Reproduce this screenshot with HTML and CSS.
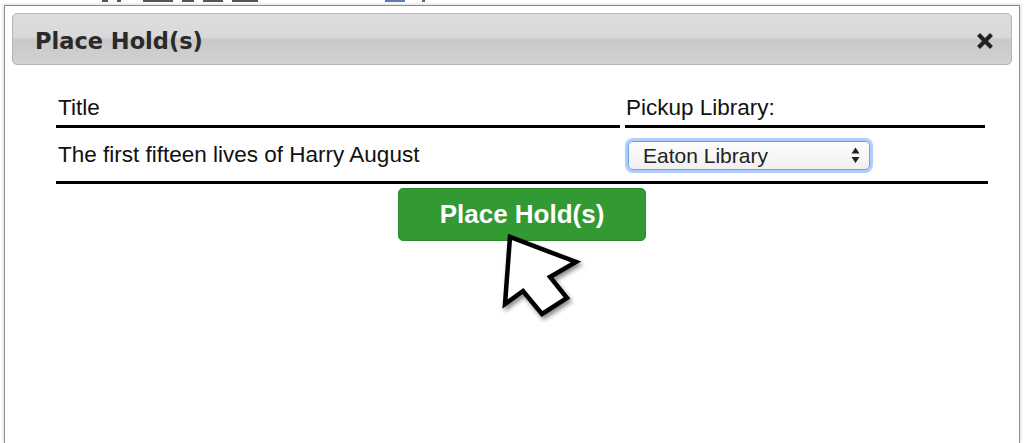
FILE: index.html
```html
<!DOCTYPE html>
<html lang="en">
<head>
    <meta charset="UTF-8">
    <meta name="viewport" content="width=device-width, initial-scale=1.0">
    <title>Place Hold(s)</title>
    <link rel="stylesheet" href="styles.css">
</head>
<body>

    <!-- page behind the dialog, only its last pixels show -->
    <div class="backdrop">
        <span class="backdrop-bit bit-1"></span>
        <span class="backdrop-bit bit-2"></span>
        <span class="backdrop-bit bit-3"></span>
        <span class="backdrop-bit bit-4"></span>
        <span class="backdrop-bit bit-5"></span>
        <span class="backdrop-bit bit-6"></span>
        <span class="backdrop-tag"></span>
        <span class="backdrop-dot"></span>
    </div>

    <div class="dialog">
        <div class="dialog-titlebar">
            <span class="dialog-title">Place Hold(s)</span>
            <button class="dialog-close" aria-label="Close">
                <svg width="16" height="16" viewBox="0 0 16 16">
                    <path d="M3 3 L13 13 M13 3 L3 13" stroke="#222" stroke-width="4.2" stroke-linecap="square" fill="none" />
                </svg>
            </button>
        </div>

        <div class="holds">
            <table class="holds-table">
                <thead>
                    <tr>
                        <th class="col-title">Title</th>
                        <th class="col-pickup">Pickup Library:</th>
                    </tr>
                </thead>
                <tbody>
                    <tr>
                        <td>The first fifteen lives of Harry August</td>
                        <td>
                            <div class="select-wrap">
                                <select class="pickup-select">
                                    <option>Eaton Library</option>
                                </select>
                                <svg class="select-arrows" width="9" height="17" viewBox="0 0 9 17">
                                    <path d="M4.5 0.5 L8.5 6.5 L0.5 6.5 Z M0.5 10 L8.5 10 L4.5 16 Z" fill="#222" />
                                </svg>
                            </div>
                        </td>
                    </tr>
                </tbody>
            </table>

            <div class="actions">
                <button class="place-hold-btn">Place Hold(s)</button>
            </div>
        </div>

        <!-- mouse pointer drawn over the button -->
        <svg class="pointer" width="100" height="110" viewBox="0 0 100 110">
            <polygon points="15,12 10,79 28,66 47,89 72,73 55,52 81,37" fill="#fff" stroke="#000" stroke-width="4.5" stroke-linejoin="miter" />
        </svg>
    </div>

</body>
</html>
```

FILE: styles.css
```css
/* Global reset */
* {
    margin: 0;
    padding: 0;
    box-sizing: border-box;
}

html,
body {
    overflow: hidden;
}

body {
    font-family: "Liberation Sans", Arial, sans-serif;
    background-color: #ffffff;
    color: #111;
}

.backdrop {
    height: 5px;
    display: flex;
    align-items: flex-start;
    padding-left: 102px;
}

.backdrop-bit {
    height: 2px;
    margin-right: 9px;
    background-color: #555;
}

.bit-1 { width: 6px; }
.bit-2 { width: 4px; margin-right: 22px; }
.bit-3 { width: 30px; }
.bit-4 { width: 12px; }
.bit-5 { width: 20px; }
.bit-6 { width: 26px; }

.backdrop-tag {
    width: 20px;
    height: 2px;
    margin-left: 118px;
    background-color: #5a7db5;
}

.backdrop-dot {
    width: 3px;
    height: 2px;
    margin-left: 17px;
    background-color: #666;
}

.dialog {
    position: relative;
    margin-left: 4px;
    width: 1016px;
    height: 438px;
    padding: 7px 7px 0;
    border: 1px solid #8e8e8e;
    border-bottom: none;
    box-shadow: 0 0 3px rgba(0, 0, 0, 0.25);
    background-color: #fff;
}

.dialog-titlebar {
    display: flex;
    align-items: center;
    justify-content: space-between;
    height: 52px;
    padding: 3px 18px 0 22px;
    border: 1px solid #b4b4b4;
    border-radius: 5px;
    background: linear-gradient(#dddddd 0%, #d9d9d9 46%, #c8c8c8 52%, #d2d2d2 100%);
}

.dialog-title {
    font-family: "DejaVu Sans", Verdana, sans-serif;
    font-weight: bold;
    font-size: 22.5px;
    color: #2a2a2a;
}

.dialog-close {
    display: flex;
    border: none;
    background: none;
    cursor: pointer;
}

.holds {
    width: 932px;
    margin: 30px 0 0 44px;
}

.holds-table {
    width: 100%;
    border-collapse: separate;
    border-spacing: 0;
    border-bottom: 3px solid #000;
    font-size: 22.5px;
}

    .holds-table th {
        text-align: left;
        font-weight: normal;
        line-height: 25px;
        padding: 0 0 8px 2px;
        background-repeat: no-repeat;
        background-position: left bottom;
        background-image: linear-gradient(#000, #000);
    }

    .holds-table .col-title {
        width: 569px;
        background-size: calc(100% - 5px) 3px;
    }

    .holds-table .col-pickup {
        padding-left: 1px;
        background-size: calc(100% - 3px) 3px;
    }

    .holds-table td {
        height: 53px;
        vertical-align: middle;
        padding-left: 2px;
    }

.select-wrap {
    position: relative;
    display: inline-block;
    margin-left: 1px;
    margin-top: 1px;
}

.pickup-select {
    appearance: none;
    -webkit-appearance: none;
    display: block;
    width: 242px;
    height: 29px;
    padding-left: 14px;
    font-family: "Liberation Sans", Arial, sans-serif;
    font-size: 21px;
    color: #222;
    background: linear-gradient(#fdfdfd, #f0f0f0);
    border: 1px solid #6f9fe4;
    border-radius: 5px;
    box-shadow: 0 0 1px 3px rgba(118, 168, 250, 0.6);
    outline: none;
}

.select-arrows {
    position: absolute;
    right: 10px;
    top: 6px;
    pointer-events: none;
}

.actions {
    display: flex;
    justify-content: center;
    padding-top: 4px;
}

.place-hold-btn {
    width: 248px;
    height: 53px;
    font-family: "Liberation Sans", Arial, sans-serif;
    font-weight: bold;
    font-size: 26px;
    color: #fff;
    background-color: #339933;
    border: 1px solid #2c8a2c;
    border-radius: 5px;
    cursor: pointer;
}

.pointer {
    position: absolute;
    left: 490px;
    top: 219px;
    filter: drop-shadow(2px 3px 2px rgba(0, 0, 0, 0.45));
}
```
